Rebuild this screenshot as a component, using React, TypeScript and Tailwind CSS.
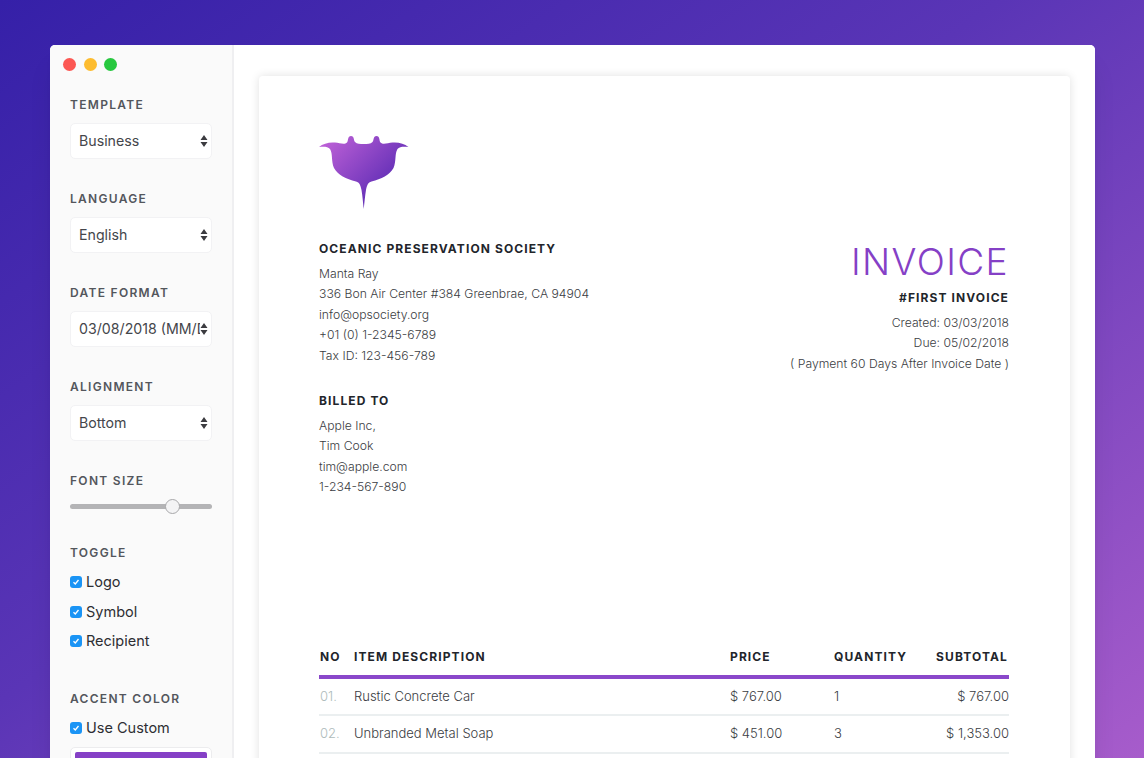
import React from 'react';

const sans = 'font-["Inter","Liberation_Sans",sans-serif]';

const SectionLabel = ({ children }: { children: React.ReactNode }) => (
  <div className={`${sans} text-[12px] leading-[16px] font-semibold tracking-[1.3px] text-[#53565c]`}>{children}</div>
);

const SelectBox = ({ value }: { value: string }) => (
  <div className="mt-[10px] flex h-9 w-[142px] items-center overflow-hidden rounded-[5px] border border-[#f2f2f4] bg-white pl-[8px] pr-[3px]">
    <span className={`${sans} flex-1 overflow-hidden text-[14.2px] whitespace-nowrap text-[#44464b]`}>{value}</span>
    <svg width="8" height="14" viewBox="0 0 8 14" className="shrink-0">
      <path d="M4 1 L7.5 6 H0.5 Z M4 13 L0.5 8 H7.5 Z" fill="#3c3c40" />
    </svg>
  </div>
);

const Check = ({ label }: { label: string }) => (
  <div className="flex h-[18px] items-center gap-[4px]">
    <span className="flex h-3 w-3 items-center justify-center rounded-[3px] bg-[#1a94f5]">
      <svg width="8" height="8" viewBox="0 0 8 8" fill="none">
        <path d="M1.5 4.2 L3.3 6 L6.5 2" stroke="#fff" strokeWidth="1.3" />
      </svg>
    </span>
    <span className={`${sans} text-[14.5px] text-[#2d2e32]`}>{label}</span>
  </div>
);

const Logo = () => (
  <svg width="90" height="73" viewBox="0 0 90 73">
    <defs>
      <linearGradient id="manta" x1="0.1" y1="0.05" x2="0.85" y2="0.65">
        <stop offset="0" stopColor="#bb5fd6" />
        <stop offset="1" stopColor="#5f2db5" />
      </linearGradient>
    </defs>
    <path
      d="M0 11 C4 7.5 10 6 16 6.5 C21 7 25.5 9 28 6.5 C29.5 4.5 28.5 0 32 0 C35.5 0 34.5 4.5 36 6 C38 8 41 8 44.7 8 C48.5 8 51.5 8 53.5 6 C55 4.5 54 0 57.5 0 C61 0 60 4.5 61.5 6.5 C64 9 68.5 7 73.5 6.5 C79.5 6 85.5 7.5 89.4 11 C85 10.5 80.5 10.5 78.5 13 C75.5 18 77.5 25 74.5 32 C70.5 39 62.5 43 52.5 45.5 C49 46.5 48 49 47 54 C46 60 45.5 66 44.7 73 C44 66 43.5 60 42.5 54 C41.5 49 40.5 46.5 37 45.5 C27 43 19 39 15 32 C12 25 14 18 11 13 C9 10.5 4.5 10.5 0 11 Z"
      fill="url(#manta)"
    />
  </svg>
);

const items = [
  { no: '01.', name: 'Rustic Concrete Car', price: '$ 767.00', qty: '1', subtotal: '$ 767.00' },
  { no: '02.', name: 'Unbranded Metal Soap', price: '$ 451.00', qty: '3', subtotal: '$ 1,353.00' },
];

const bodyText = `${sans} text-[12.2px] leading-[20.4px] font-light text-[#3a3c42]`;
const titleText = `${sans} text-[12px] leading-[16px] font-bold tracking-[1.1px] text-[#22252b]`;

const App: React.FC = () => {
  return (
    <div className="h-[758px] w-[1144px] overflow-hidden bg-[linear-gradient(145deg,#3520a8_0%,#5a35b6_45%,#a75ccb_100%)] pt-[45px] pl-[50px]">
      <div className="flex h-[713px] w-[1045px] overflow-hidden rounded-t-[5px] bg-white shadow-xl">
        <aside className="w-[184px] shrink-0 border-r-2 border-[#efeff1] bg-[#fafafa]">
          <div className="flex gap-[7.5px] pt-[13px] pl-[13px]">
            <span className="h-[13px] w-[13px] rounded-full bg-[#fc5753]" />
            <span className="h-[13px] w-[13px] rounded-full bg-[#fdbc2f]" />
            <span className="h-[13px] w-[13px] rounded-full bg-[#27c83f]" />
          </div>
          <div className="flex flex-col pt-[26px] pl-[20px]">
            <SectionLabel>TEMPLATE</SectionLabel>
            <SelectBox value="Business" />
            <div className="mt-[32px]"><SectionLabel>LANGUAGE</SectionLabel></div>
            <SelectBox value="English" />
            <div className="mt-[32px]"><SectionLabel>DATE FORMAT</SectionLabel></div>
            <SelectBox value="03/08/2018 (MM/DD/YYYY)" />
            <div className="mt-[32px]"><SectionLabel>ALIGNMENT</SectionLabel></div>
            <SelectBox value="Bottom" />
            <div className="mt-[32px]"><SectionLabel>FONT SIZE</SectionLabel></div>
            <div className="relative mt-[15px] h-[5px] w-[142px] rounded-full bg-[#b4b4b6]">
              <span className="absolute top-[-5px] left-[95px] h-[15px] w-[15px] rounded-full border border-[#a8a8aa] bg-[#f4f4f5]" />
            </div>
            <div className="mt-[36px]"><SectionLabel>TOGGLE</SectionLabel></div>
            <div className="mt-[12px] flex flex-col gap-[11.5px]">
              <Check label="Logo" />
              <Check label="Symbol" />
              <Check label="Recipient" />
            </div>
            <div className="mt-[41px]"><SectionLabel>ACCENT COLOR</SectionLabel></div>
            <div className="mt-[12px]"><Check label="Use Custom" /></div>
            <div className="mt-[10px] h-9 w-[142px] rounded-[5px] border border-[#ececee] bg-white p-[4px]">
              <div className="h-full rounded-[2px] bg-[#8540c6]" />
            </div>
          </div>
        </aside>
        <main className="min-w-0 flex-1 bg-white pt-[31px] pl-[25px]">
          <div className="h-[700px] w-[811px] rounded-[4px] bg-white pt-[60px] pr-[61px] pl-[60px] shadow-[0_0_10px_rgba(0,0,0,0.12)]">
            <Logo />
            <div className="mt-[32px] flex justify-between">
              <div>
                <div className={titleText}>OCEANIC PRESERVATION SOCIETY</div>
                <div className={`mt-[7px] ${bodyText}`}>
                  <div>Manta Ray</div>
                  <div>336 Bon Air Center #384 Greenbrae, CA 94904</div>
                  <div>info@opsociety.org</div>
                  <div>+01 (0) 1-2345-6789</div>
                  <div>Tax ID: 123-456-789</div>
                </div>
                <div className={`mt-[27px] ${titleText}`}>BILLED TO</div>
                <div className={`mt-[7px] ${bodyText}`}>
                  <div>Apple Inc,</div>
                  <div>Tim Cook</div>
                  <div>tim@apple.com</div>
                  <div>1-234-567-890</div>
                </div>
              </div>
              <div className="text-right">
                <div className={`${sans} mt-[-1px] text-[37px] leading-[44px] font-light tracking-[1.4px] text-[#8540c6]`}>INVOICE</div>
                <div className={`mt-[6px] ${titleText}`}>#FIRST INVOICE</div>
                <div className={`mt-[7px] ${bodyText}`}>
                  <div>Created: 03/03/2018</div>
                  <div>Due: 05/02/2018</div>
                  <div>( Payment 60 Days After Invoice Date )</div>
                </div>
              </div>
            </div>
            <div className="mt-[151px]">
              <div className={`flex h-[30px] items-start border-b-4 border-[#8a48ca] ${titleText}`}>
                <div className="w-[35px] pl-[1px]">NO</div>
                <div className="w-[376px]">ITEM DESCRIPTION</div>
                <div className="w-[104px]">PRICE</div>
                <div className="w-[90px]">QUANTITY</div>
                <div className="flex-1 pr-[1px] text-right">SUBTOTAL</div>
              </div>
              {items.map(item => (
                <div key={item.no} className={`flex h-[37.5px] items-center border-b-2 border-[#ebeff0] ${sans} text-[13px] font-light text-[#3a3c42]`}>
                  <div className="w-[35px] pl-[1px] text-[#aebbbb]">{item.no}</div>
                  <div className="w-[376px]">{item.name}</div>
                  <div className="w-[104px]">{item.price}</div>
                  <div className="w-[90px]">{item.qty}</div>
                  <div className="flex-1 text-right">{item.subtotal}</div>
                </div>
              ))}
            </div>
          </div>
        </main>
      </div>
    </div>
  );
};

export default App;
